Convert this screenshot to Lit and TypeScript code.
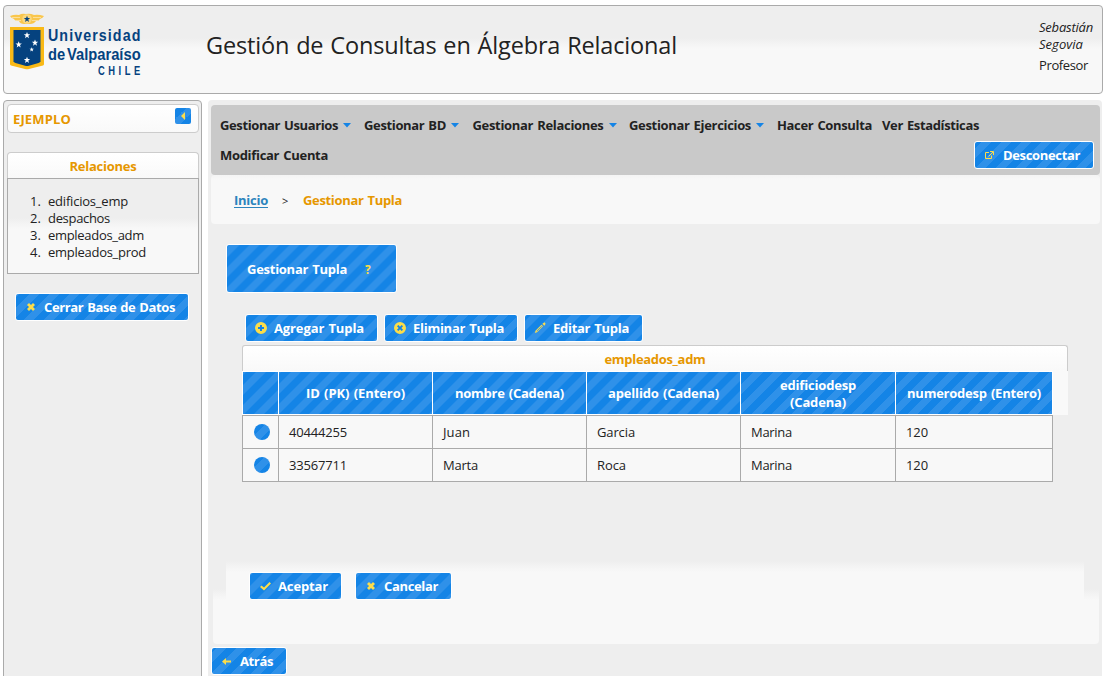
import { LitElement, html, svg, css } from "lit";
import { customElement, property, query } from "lit/decorators.js";

/* Text run set to an exact advance width by tracking. */
@customElement("fit-text")
class FitText extends LitElement {
  @property({ type: Number }) w = 0;
  @property() text = "";
  @query("span") run!: HTMLSpanElement;
  static styles = css`
    :host { display: inline-block; white-space: nowrap; }
    span { display: inline-block; white-space: pre; text-decoration: inherit; word-spacing: 1px; }
  `;
  updated() {
    this.run.style.letterSpacing = "0";
    const natural = this.run.getBoundingClientRect().width;
    this.run.style.letterSpacing = `${(this.w - natural) / this.text.length}px`;
  }
  render() {
    return html`<span>${this.text}</span>`;
  }
}

const fit = (text: string, w: number) => html`<fit-text .text=${text} .w=${w}></fit-text>`;

const icons: Record<string, unknown> = {
  close: svg`<path d="M4 6l2-2 2 2 2-2 2 2-2 2 2 2-2 2-2-2-2 2-2-2 2-2z"/>`,
  plus: svg`<path fill-rule="evenodd" d="M8 2a6 6 0 1 0 0 12A6 6 0 0 0 8 2zM7 5h2v2h2v2H9v2H7V9H5V7h2z"/>`,
  cross: svg`<path fill-rule="evenodd" d="M8 2a6 6 0 1 0 0 12A6 6 0 0 0 8 2zM5 6.3L6.3 5 8 6.700 9.700 5 11 6.300 9.300 8 11 9.700 9.700 11 8 9.300 6.300 11 5 9.700 6.700 8z"/>`,
  pencil: svg`<path d="M3 13l.5-2.200L9.500 4.800l1.500 1.500-6 6zM10.500 3.800l1 -1 .5 .5v-.8h1v.8h.5v1h-.6l.3.4-1 1z"/><path d="M4.800 11.200l5-5" stroke="#2b8ee8" stroke-width=".8"/>`,
  ext: svg`<path d="M7 5.500H3.500v6h6V8.500M8 4.500h3.500V8M11 5L6.500 9.500" fill="none" stroke="#fcdd4a"/>`,
  check: svg`<path d="M3 9l1.500-1.500L7 9.600 12.500 4 14 5.500 7 12.500z"/>`,
  back: svg`<path d="M3 8.500L7 5v2.500h5v2H7V12z"/>`,
};

const icon = (name: string) =>
  html`<svg class="icon" width="16" height="16" viewBox="0 0 16 16" fill="#fcdd4a">${icons[name]}</svg>`;

@customElement("app-root")
class AppRoot extends LitElement {
  static styles = css`
    :host {
      display: block; height: 676px; overflow: hidden; background: #fff; color: #222;
      font: 13px/17px "Open Sans", "Noto Sans", sans-serif;
    }
    * { box-sizing: border-box; }
    .soft {
      background: linear-gradient(#eee 45%, #f3f3f3 50%, #f8f8f8 56%) 0 100% / 100% 100px no-repeat #eee;
    }
    .stripe {
      background: linear-gradient(135deg, #2f91e9 12.5%, #1484e6 12.5%, #1484e6 37.5%, #2f91e9 37.5%, #2f91e9 62.5%, #1484e6 62.5%, #1484e6 87.5%, #2f91e9 87.5%)
        50% 50% / 20px 20px;
    }
    .header { padding-top: 5px; }
    .top {
      height: 89px; margin: 0 2px 0 3px; border: 1px solid #aaa; border-radius: 4px;
      display: flex; align-items: flex-start;
    }
    .logo { margin: 6px 0 0 4px; flex: none; }
    .title { font-size: 23.500px; line-height: 30px; margin: 24px 0 0 54px; width: 833px; flex: none; }
    .user { font-style: italic; margin-top: 13px; }
    .role { font-style: normal; margin-top: 4px; }
    .user div { height: 17px; }
    .cols { display: flex; margin: 6px 0 0 3px; align-items: flex-start; }
    .side { width: 199px; height: 590px; border: 1px solid #aaa; border-radius: 4px; background: #eee; padding: 3px 2px 3px 3px; }
    .cap {
      border: 1px solid #ccc; border-radius: 4px; background: linear-gradient(#fff, #f9f9f9);
      color: #e69700; font-weight: 700;
    }
    .db { height: 29px; display: flex; justify-content: space-between; padding: 3px 7px 0 5px; line-height: 22px; }
    .fold { width: 16px; height: 16px; border-radius: 2px; display: block; }
    .relcap { margin-top: 19px; height: 26px; text-align: center; line-height: 26px; border-radius: 4px 4px 0 0; border-bottom: 0; }
    .rels { border: 1px solid #aaa; height: 96px; padding: 14px 0 0 19px; }
    .rel { display: flex; height: 17px; }
    .num { width: 21px; padding-left: 3px; }
    .btn {
      display: flex; align-items: center; height: 28px; border: 1px solid #fff; border-radius: 3px;
      color: #fff; font-weight: 700; padding-left: 7px; gap: 5px; flex: none;
    }
    .icon { flex: none; display: block; }
    .sidebtn { margin: 19px 0 0 8px; }
    .main { width: 894px; height: 590px; margin-left: 6px; padding: 5px 0 0 3px; background: #eee; border-radius: 4px; }
    .nav { width: 889px; height: 70px; background: #c9c9c9; border-radius: 4px; padding: 12px 6px 0 9px; font-weight: 700; }
    .row { display: grid; grid-template-columns: 144px 108.5px 156.5px 148px 105px 100px; }
    .item { display: flex; gap: 5px; }
    .tri { display: block; margin-top: 6px; }
    .row2 { display: flex; justify-content: space-between; margin-top: 7px; }
    .acct { margin-top: 6px; }
    .crumb { width: 889px; height: 49px; border-radius: 4px; display: flex; padding: 17px 0 0 23px; font-weight: 700; }
    .link { color: #2c84bd; width: 48px; }
    .link fit-text { text-decoration: underline; text-underline-offset: 2px; }
    .sep { font-weight: 400; font-size: 11px; width: 21px; }
    .now { color: #e69700; }
    .body { width: 886px; height: 418px; margin: 2px 0 0 2px; padding: 18px 0 0 13px; border-radius: 4px; }
    .big { display: flex; align-items: center; width: 171px; height: 49px; border: 1px solid #fff; border-radius: 3px; color: #fff; font-weight: 700; padding: 2px 0 0 20px; gap: 18px; }
    .q { color: #fcdd4a; font-size: 12px; }
    .tools { display: flex; gap: 6px; margin: 21px 0 0 19px; }
    .grid { margin: 3px 0 0 16px; width: 826px; }
    .tcap { height: 26px; text-align: center; line-height: 26px; border-radius: 3px 3px 0 0; border-bottom: 0; }
    .head { height: 44px; background: #f9f9f9; }
    .cells { display: grid; grid-template-columns: 36px 154px 154px 154px 155px 158px; width: 811px; }
    .th {
      height: 44px; border: 1px solid #fff; border-right: 0; color: #fff; font-weight: 700; padding-top: 1px;
      display: flex; flex-direction: column; align-items: center; justify-content: center;
    }
    .th:last-child { border-right: 1px solid #fff; }
    .data { border-bottom: 1px solid #aaa; }
    .td { height: 33px; border: 1px solid #aaa; border-width: 1px 0 0 1px; background: #f8f8f8; padding: 8px 0 0 10px; }
    .td:last-child { border-right-width: 1px; }
    .dot { width: 16px; height: 16px; border-radius: 50%; margin-left: 1px; }
    .foot { margin: 34px 0 0; width: 858px; height: 100px; padding: 56px 0 0 23px; display: flex; gap: 13px; border-radius: 4px; }
    .after { margin: 3px 0 0 0; }
  `;

  button(name: string, text: string, textWidth: number, width: number, extra = "") {
    return html`<div class="btn stripe ${extra}" style="width:${width}px">${icon(name)}${fit(text, textWidth)}</div>`;
  }

  logo() {
    const star = "M0-3.200L.9-1H3.200L1.300.500 2 3 0 1.500-2 3-1.300.500-3.200-1H-.9z";
    return html`<svg class="logo" width="144" height="68" viewBox="8 12 144 68">
      <path d="M10 16q5-2 9-1 3-2 7-1 4-1 8 1 4-1 10 1-1 2-4 3-1 2-4 2-2 3-6 3h-6q-4 0-5-3-4 0-5-2-3-1-4-3z" fill="#f9c64c"/>
      <path d="M12 17.500h8M16 20.500h5M33 17.500h8M32 20.500h6" stroke="#fce6ac" stroke-width=".8"/>
      <circle cx="27" cy="19" r="4.800" fill="#fbd87f"/>
      <path d=${star} transform="translate(27 19)" fill="#05427f"/>
      <path d="M10 27h34v37q0 1-1 1.500L29 69q-2 .6-4 0L11 65.500q-1-.5-1-1.500z" fill="#f9b916"/>
      <path d="M13.500 30h27v31.500q-1 1-2 1.500L28 66h-2l-10.500-3q-1-.5-2-1.500z" fill="#05427f"/>
      ${[[27, 35.3, 1], [18.7, 44.5, 1], [35, 42.7, 1], [31.7, 49.5, 0.7], [27, 60, 1]].map(
        ([x, y, s]) => svg`<path d=${star} transform="translate(${x} ${y}) scale(${s})" fill="#fff"/>`
      )}
      <g fill="#05427f" font-family="Liberation Sans, sans-serif" font-weight="700" font-size="17">
        <text transform="translate(48 40.500) scale(.84 1)" textLength="110" lengthAdjust="spacing">Universidad</text>
        <text transform="translate(48 60) scale(.82 1)" textLength="113" lengthAdjust="spacingAndGlyphs">de<tspan dx="2">Valparaíso</tspan></text>
        <text transform="translate(98 75) scale(.75 1)" font-size="12.500" letter-spacing="4.700">CHILE</text>
      </g>
    </svg>`;
  }

  menu(text: string, w: number, drop = true) {
    return html`<div class="item">${fit(text, w)}${drop
      ? html`<svg class="tri" width="8" height="5" viewBox="0 0 8 5"><path d="M0 0h8L4 4.500z" fill="#1484e6"/></svg>`
      : ""}</div>`;
  }

  render() {
    const rels: [string, number][] = [["edificios_emp", 80], ["despachos", 62], ["empleados_adm", 96], ["empleados_prod", 98]];
    const heads: [string, number][][] = [
      [], [["ID (PK) (Entero)", 99]], [["nombre (Cadena)", 109]], [["apellido (Cadena)", 111]],
      [["edificiodesp", 76], ["(Cadena)", 56]], [["numerodesp (Entero)", 134]],
    ];
    const rows: [string, number][][] = [
      [["40444255", 58], ["Juan", 27], ["Garcia", 38], ["Marina", 41], ["120", 22]],
      [["33567711", 58], ["Marta", 35], ["Roca", 29], ["Marina", 41], ["120", 22]],
    ];
    return html`
      <div class="header">
        <div class="top soft">
          ${this.logo()}
          <div class="title">${fit("Gestión de Consultas en Álgebra Relacional", 471)}</div>
          <div class="user">
            <div>${fit("Sebastián", 54)}</div>
            <div>${fit("Segovia", 44)}</div>
            <div class="role">${fit("Profesor", 49)}</div>
          </div>
        </div>
      </div>
      <div class="cols">
        <div class="side">
          <div class="cap db">
            ${fit("EJEMPLO", 58)}
            <svg class="fold stripe" viewBox="0 0 16 16"><path d="M10 4v8L6 8z" fill="#fcdd4a"/></svg>
          </div>
          <div class="cap relcap">${fit("Relaciones", 67)}</div>
          <div class="rels soft">
            ${rels.map(([t, w], i) => html`<div class="rel"><span class="num">${fit(`${i + 1}.`, 11)}</span>${fit(t, w)}</div>`)}
          </div>
          ${this.button("close", "Cerrar Base de Datos", 131, 174, "sidebtn")}
        </div>
        <div class="main">
          <div class="nav">
            <div class="row">
              ${this.menu("Gestionar Usuarios", 118)}${this.menu("Gestionar BD", 82)}
              ${this.menu("Gestionar Relaciones", 131)}${this.menu("Gestionar Ejercicios", 122)}
              ${this.menu("Hacer Consulta", 95, false)}${this.menu("Ver Estadísticas", 97, false)}
            </div>
            <div class="row2"><div class="acct">${fit("Modificar Cuenta", 108)}</div>${this.button("ext", "Desconectar", 77, 120)}</div>
          </div>
          <div class="crumb soft">
            <span class="link">${fit("Inicio", 34)}</span><span class="sep">&gt;</span>
            <span class="now">${fit("Gestionar Tupla", 99)}</span>
          </div>
          <div class="body soft">
            <div class="big stripe">${fit("Gestionar Tupla", 100)}<span class="q">?</span></div>
            <div class="tools">
              ${this.button("plus", "Agregar Tupla", 90, 133)}${this.button("cross", "Eliminar Tupla", 91, 134)}
              ${this.button("pencil", "Editar Tupla", 76, 119)}
            </div>
            <div class="grid">
              <div class="cap tcap">${fit("empleados_adm", 101)}</div>
              <div class="head"><div class="cells">
                ${heads.map((h) => html`<div class="th stripe">${h.map(([t, w]) => fit(t, w))}</div>`)}
              </div></div>
              ${rows.map((r, i) => html`<div class="cells ${i === rows.length - 1 ? "data" : ""}">
                <div class="td"><div class="dot stripe"></div></div>
                ${r.map(([t, w]) => html`<div class="td">${fit(t, w)}</div>`)}
              </div>`)}
            </div>
            <div class="foot soft">
              ${this.button("check", "Aceptar", 50, 93)}${this.button("close", "Cancelar", 54, 97)}
            </div>
          </div>
          <div class="after">${this.button("back", "Atrás", 33, 76)}</div>
        </div>
      </div>
    `;
  }
}
